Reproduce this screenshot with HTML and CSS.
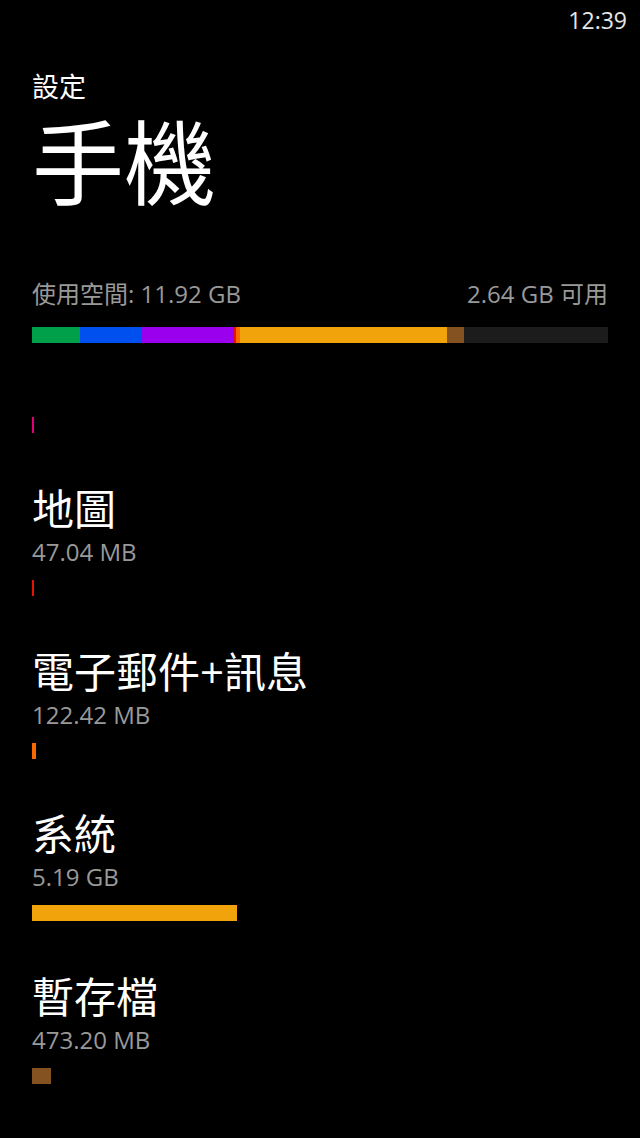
FILE: index.html
```html
<!DOCTYPE html>
<html lang="zh-Hant">
<head>
  <meta charset="UTF-8" />
  <meta name="viewport" content="width=device-width, initial-scale=1.0" />
  <title>手機</title>
  <link rel="stylesheet" href="styles.css">
</head>
<body>

  <div class="status">12:39</div>

  <div class="page">
    <div class="crumb">設定</div>
    <h1 class="title">手機</h1>

    <div class="usage">
      <span>使用空間: 11.92 GB</span>
      <span>2.64 GB 可用</span>
    </div>
    <div class="storage">
      <div class="seg green" style="width: 48px"></div>
      <div class="seg blue" style="width: 62px"></div>
      <div class="seg purple" style="width: 92px"></div>
      <div class="seg red" style="width: 2px"></div>
      <div class="seg orange" style="width: 4px"></div>
      <div class="seg amber" style="width: 207px"></div>
      <div class="seg brown" style="width: 17px"></div>
    </div>

    <ul class="items">
      <li class="item first">
        <div class="bar magenta" style="width: 2px"></div>
      </li>
      <li class="item">
        <div class="name">地圖</div>
        <div class="size">47.04 MB</div>
        <div class="bar red" style="width: 2px"></div>
      </li>
      <li class="item">
        <div class="name">電子郵件+訊息</div>
        <div class="size">122.42 MB</div>
        <div class="bar orange" style="width: 4px"></div>
      </li>
      <li class="item">
        <div class="name">系統</div>
        <div class="size">5.19 GB</div>
        <div class="bar amber" style="width: 205px"></div>
      </li>
      <li class="item">
        <div class="name">暫存檔</div>
        <div class="size">473.20 MB</div>
        <div class="bar brown" style="width: 19px"></div>
      </li>
    </ul>
  </div>

</body>
</html>
```

FILE: styles.css
```css
* { box-sizing: border-box; }
body { margin: 0; background: #000; color: #fff; font-family: "Open Sans", "Noto Sans CJK TC", sans-serif; overflow: hidden; }

.status { height: 40px; line-height: 40px; padding-right: 13px; text-align: right; font-size: 23px; color: #e6e6e6; }

.page { padding: 0 32px; }
.crumb, .title { font-family: "Liberation Sans", "Noto Sans CJK TC", sans-serif; }
.crumb { font-size: 27px; line-height: 36px; margin-top: 30px; }
.title { font-size: 92px; font-weight: normal; line-height: 100px; margin: 10px 0 0; }

.usage { display: flex; justify-content: space-between; font-size: 24px; line-height: 32px; color: #999; margin-top: 62px; }
.storage { display: flex; height: 16px; margin-top: 17px; background: #1c1c1c; }
.seg { height: 100%; }

.items { list-style: none; margin: 74px 0 0; padding: 0; }
.item { height: 162.5px; }
.item.first { height: auto; margin-bottom: 50px; }
.name { font-size: 42px; line-height: 52px; }
.size { font-size: 24px; line-height: 30px; margin-top: 2px; color: #999; }
.bar { height: 16px; margin-top: 13px; }
.first .bar { margin-top: 0; }

.green { background: #00a04a; }
.blue { background: #0050ef; }
.purple { background: #9b00ee; }
.red { background: #e51400; }
.orange { background: #fa6800; }
.amber { background: #f0a30a; }
.brown { background: #845221; }
.magenta { background: #e0007a; }
```
